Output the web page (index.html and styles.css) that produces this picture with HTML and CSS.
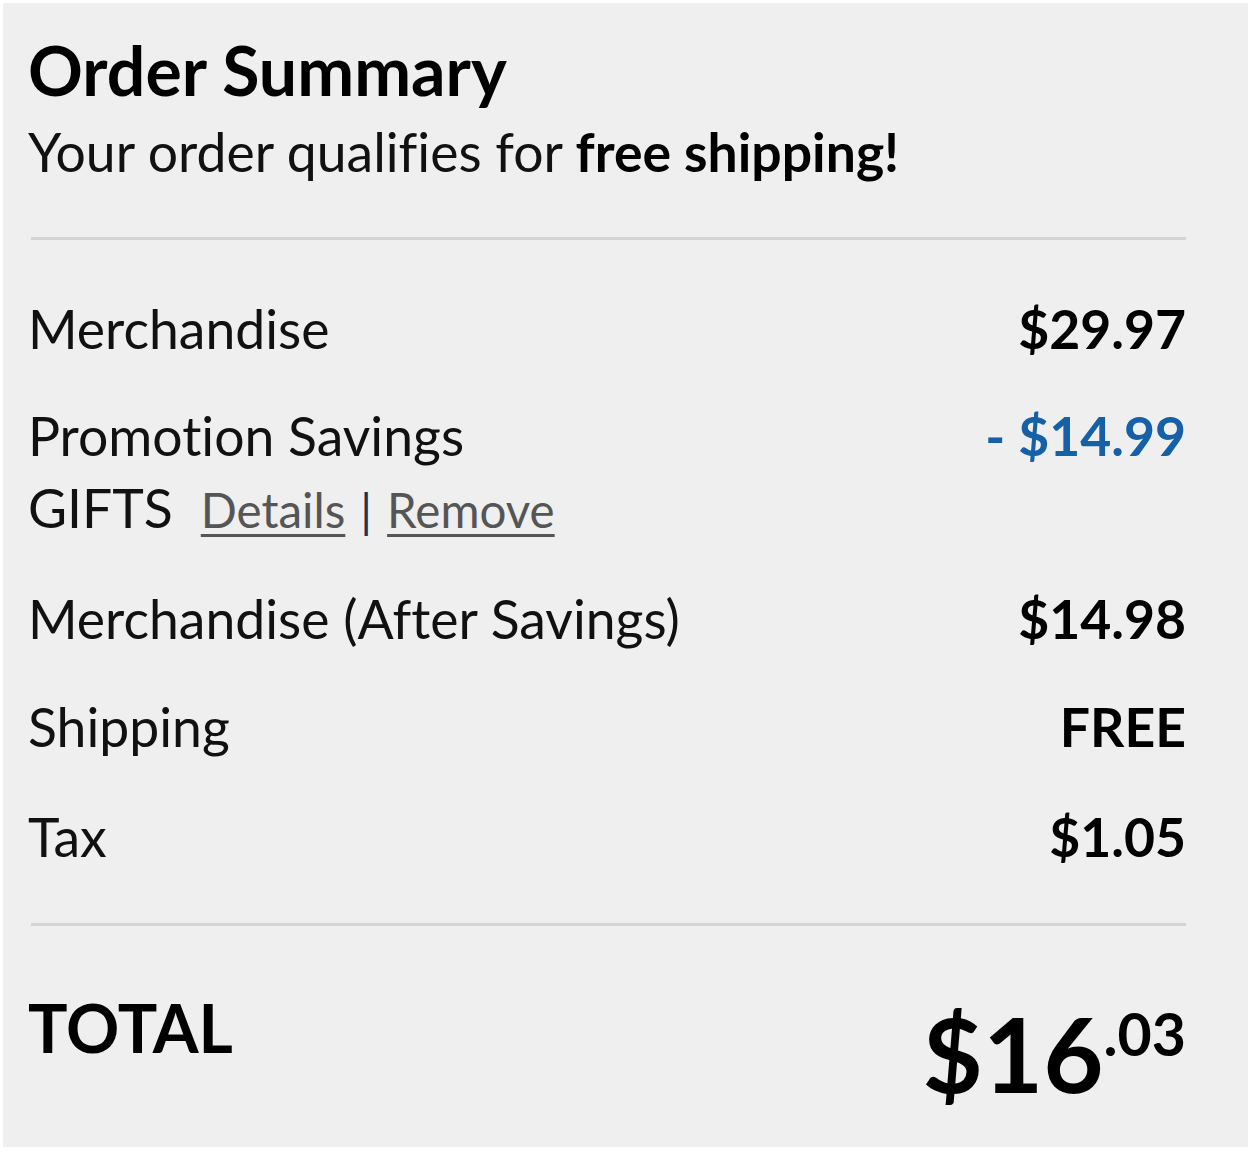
FILE: index.html
```html
<!DOCTYPE html>
<html lang="en">
<head>
<meta charset="utf-8">
<title>Order Summary</title>
<link rel="stylesheet" href="styles.css">
</head>
<body>
<div class="panel">
  <h1 class="title">Order Summary</h1>
  <p class="subtitle">Your order qualifies for <strong>free shipping!</strong></p>
  <hr class="divider">
  <div class="rows">
    <div class="row">
      <span class="label">Merchandise</span>
      <span class="value">$29.97</span>
    </div>
    <div class="row promo">
      <div class="promo-main">
        <span class="label">Promotion Savings</span>
        <span class="value savings">- $14.99</span>
      </div>
      <div class="promo-code">
        <span class="code">GIFTS</span>
        <a class="link" href="#">Details</a><span class="pipe">|</span><a class="link" href="#">Remove</a>
      </div>
    </div>
    <div class="row">
      <span class="label">Merchandise (After Savings)</span>
      <span class="value">$14.98</span>
    </div>
    <div class="row">
      <span class="label">Shipping</span>
      <span class="value">FREE</span>
    </div>
    <div class="row tax">
      <span class="label">Tax</span>
      <span class="value">$1.05</span>
    </div>
  </div>
  <hr class="divider divider-total">
  <div class="total">
    <span class="total-label">TOTAL</span>
    <span class="amount"><span class="dollars">$16</span><span class="cents">.03</span></span>
  </div>
</div>
</body>
</html>
```
FILE: styles.css
```css
html, body {
  margin: 0;
  padding: 0;
  background: #ffffff;
}

body {
  font-family: Lato, "Open Sans", sans-serif;
  font-variant-ligatures: none;
  color: #111111;
}

.panel {
  margin: 3px;
  width: 1245px;
  height: 1144px;
  box-sizing: border-box;
  background: #efefef;
  padding: 27px 62px 0 25px;
}

.title {
  margin: 0;
  font-size: 68px;
  line-height: 80px;
  font-weight: 700;
  color: #000;
}

.subtitle {
  margin: 9px 0 0;
  font-size: 53.5px;
  line-height: 64px;
  color: #111;
}

.subtitle strong {
  font-weight: 700;
  color: #000;
}

.divider {
  margin: 54px 0 0 3px;
  border: 0;
  height: 3px;
  background: #d4d4d4;
}

.rows {
  display: flex;
  flex-direction: column;
  gap: 44px;
  margin-top: 56px;
}

.row {
  display: flex;
  justify-content: space-between;
  align-items: baseline;
  font-size: 53.5px;
  line-height: 64px;
}

.row.promo {
  flex-direction: column;
  align-items: stretch;
  gap: 8px;
  margin-top: -1px;
}

.row.tax {
  margin-top: 2px;
}

.promo-main {
  display: flex;
  justify-content: space-between;
  align-items: baseline;
}

.value {
  font-weight: 700;
  color: #000;
}

.value.savings {
  color: #1660a8;
}

.promo-code {
  display: flex;
  align-items: baseline;
}

.code {
  margin-right: 28px;
}

.link {
  font-size: 47.5px;
  color: #555555;
  text-decoration: underline;
  text-decoration-thickness: 3px;
  text-underline-offset: 6px;
}

.pipe {
  font-size: 47px;
  color: #1b3550;
  margin: 0 15px;
}

.divider-total {
  margin-top: 55px;
}

.total {
  display: flex;
  justify-content: space-between;
  align-items: flex-start;
  margin-top: 69px;
}

.total-label {
  font-size: 66px;
  line-height: 66px;
  font-weight: 700;
  color: #000;
}

.amount {
  display: flex;
  align-items: flex-start;
  margin-top: 6px;
  font-weight: 700;
  color: #000;
}

.dollars {
  font-size: 104px;
  line-height: 104px;
}

.cents {
  font-size: 59px;
  line-height: 59px;
  margin-top: 3px;
}
```
